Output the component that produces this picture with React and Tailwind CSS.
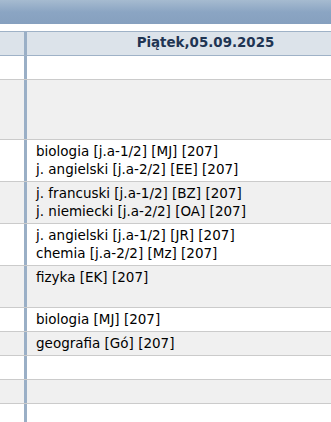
import React from "react";

const rows = [
  { h: "h-[24px]", lines: [] },
  { h: "h-[60px]", lines: [] },
  { h: "h-[42px]", lines: ["biologia [j.a-1/2] [MJ] [207]", "j. angielski [j.a-2/2] [EE] [207]"] },
  { h: "h-[42px]", lines: ["j. francuski [j.a-1/2] [BZ] [207]", "j. niemiecki [j.a-2/2] [OA] [207]"] },
  { h: "h-[42px]", lines: ["j. angielski [j.a-1/2] [JR] [207]", "chemia [j.a-2/2] [Mz] [207]"] },
  { h: "h-[42px]", lines: ["fizyka [EK] [207]"] },
  { h: "h-[24px]", lines: ["biologia [MJ] [207]"] },
  { h: "h-[24px]", lines: ["geografia [Gó] [207]"] },
  { h: "h-[24px]", lines: [] },
  { h: "h-[24px]", lines: [] },
  { h: "h-[24px]", lines: [] },
];

const App = () => {
  return (
    <div className="w-[331px] h-[422px] overflow-hidden bg-white font-['DejaVu_Sans',sans-serif]">
      <div className="h-[24px] bg-linear-to-b from-[#a6bbd0] via-[#8ba5c3] to-[#86a0bf]"></div>
      <div className="h-[7px]"></div>
      <div className="w-[384px]">
        {/* naglowek */}
        <div className="flex h-[25px] border-y border-[#9fb2c7] bg-[#dce3ea]">
          <div className="w-[24px]"></div>
          <div className="w-[3px] bg-[#9aafc6]"></div>
          <div className="flex-1 flex items-center justify-center text-[13.4px] font-bold text-[#1f3553]">
            Piątek,05.09.2025
          </div>
        </div>
        {rows.map((r, i) => (
          <div
            key={i}
            className={`flex ${r.h} border-b border-[#cbcbcb] ${i % 2 === 1 ? "bg-[#f0f0f0]" : "bg-white"}`}
          >
            <div className="w-[24px]"></div>
            <div className="w-[3px] bg-[#9aafc6]"></div>
            <div className="flex-1 pl-[9px] pt-[2px] text-[13.5px] leading-[18px] text-black">
              {r.lines.map((l, j) => (
                <div key={j}>{l}</div>
              ))}
            </div>
          </div>
        ))}
      </div>
    </div>
  );
};

export default App;
